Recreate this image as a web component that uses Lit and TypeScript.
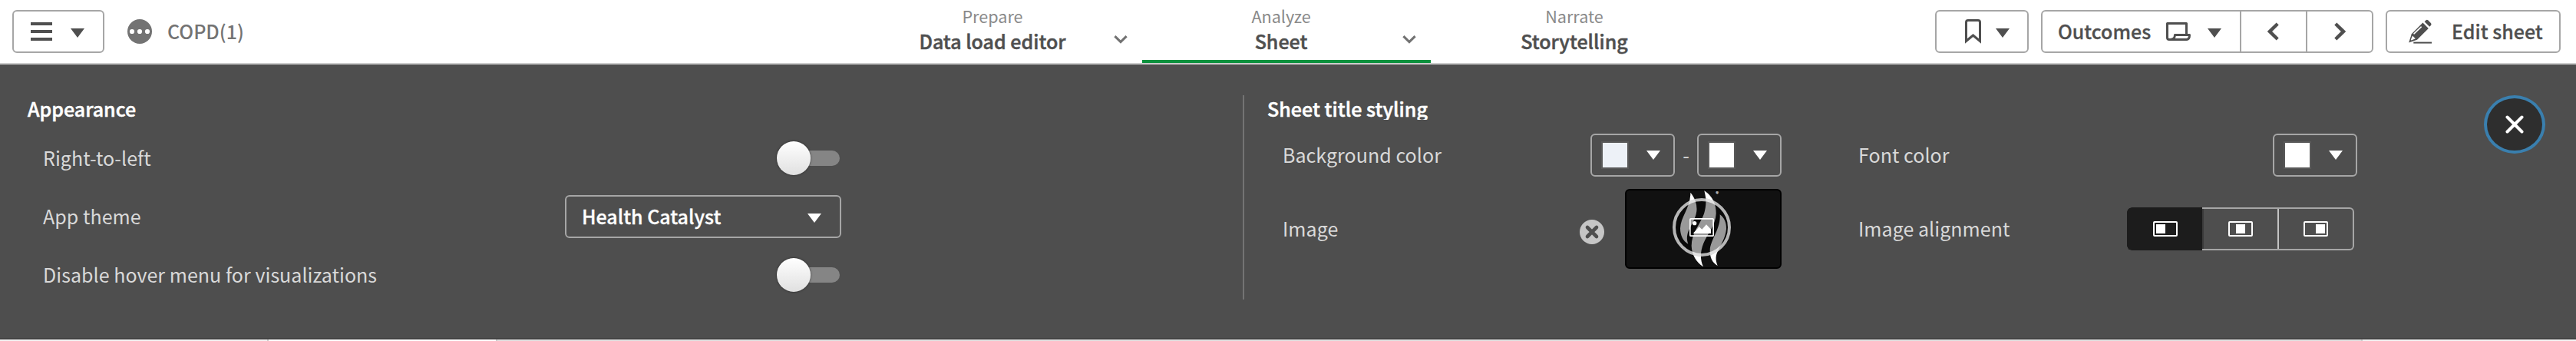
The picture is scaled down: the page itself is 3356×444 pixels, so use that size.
import { LitElement, html, css, svg, nothing } from "lit";
import { customElement, property } from "lit/decorators.js";

const caret = html`<svg class="caret" width="18" height="12" viewBox="0 0 18 12"><path d="M0 0H18L9 12Z" fill="currentColor"/></svg>`;

@customElement("color-button")
class ColorButton extends LitElement {
  @property() color = "#ffffff";
  static styles = css`
    :host { display: block; }
    .button { box-sizing: border-box; width: 110px; height: 56px; border: 2px solid #a6a6a6; border-radius: 6px;
      display: flex; align-items: center; justify-content: space-between; padding: 0 17px 0 12px; color: #fff; }
    .swatch { width: 32px; height: 32px; border: 2px solid #595959; }
    svg { display: block; }
  `;
  render() {
    return html`<div class="button"><div class="swatch" style="background:${this.color}"></div>${caret}</div>`;
  }
}

@customElement("toggle-switch")
class ToggleSwitch extends LitElement {
  static styles = css`
    :host { display: flex; align-items: center; width: 82px; height: 44px; }
    .knob { width: 44px; height: 44px; border-radius: 50%; flex: none; z-index: 1;
      background: linear-gradient(#ffffff, #e0e0e0); box-shadow: 0 0 3px rgba(0,0,0,.5); }
    .track { height: 20px; flex: 1; margin-left: -20px; border-radius: 10px; background: #858585; }
  `;
  render() {
    return html`<div class="knob"></div><div class="track"></div>`;
  }
}

@customElement("app-root")
class AppRoot extends LitElement {
  static styles = css`
    :host { display: block; width: 3356px; height: 444px; overflow: hidden; background: #fff;
      font-family: "Noto Sans CJK SC", "Noto Sans", sans-serif; font-size: 25px; line-height: 32px; color: #4f4f4f; }
    * { box-sizing: border-box; }
    svg { display: block; flex: none; }
    .header { display: flex; height: 84px; border-bottom: 2px solid #ccc; background: #fff; }
    .left { width: 1112px; display: flex; align-items: center; padding-left: 16px; }
    .btn { height: 56px; border: 2px solid #a6a6a6; border-radius: 6px; display: flex; align-items: center; }
    .menu { width: 120px; padding: 0 24px 0 22px; justify-content: space-between; }
    .btn .caret { margin-top: 4px; }
    .app { margin: 0 20px 0 30px; }
    .name { color: #737373; font-weight: 500; padding-bottom: 2px; white-space: nowrap; }
    .tab { width: 376px; height: 82px; display: flex; padding-left: 42px; }
    .tab.active { border-bottom: 4px solid #0b913d; }
    .tab .texts { width: 278px; text-align: center; padding-top: 5px; white-space: nowrap; }
    .tab.plain { padding-left: 0; }
    .tab.plain .texts { width: 374px; }
    .kind { font-size: 21.6px; line-height: 31px; color: #8a8a8a; }
    .view { font-size: 25px; line-height: 32px; font-weight: 500; padding-top: 1px; -webkit-text-stroke: .5px #4f4f4f; }
    .tab .chev { margin: 46px 0 0 19px; color: #737373; }
    .right { flex: 1; display: flex; align-items: center; justify-content: flex-end; gap: 16px; padding-right: 20px; }
    .bookmark { width: 122px; padding-left: 37px; gap: 19px; }
    .group { width: 433px; }
    .sheet { width: 257px; padding: 0 24px 0 20px; display: flex; align-items: center; height: 52px; }
    .sheet .easel { margin: 0 22px 0 auto; }
    .strong { font-weight: 500; padding-bottom: 2px; white-space: nowrap; -webkit-text-stroke: .3px currentColor; }
    .arrow { width: 86px; height: 52px; border-left: 2px solid #a6a6a6; display: flex; align-items: center; justify-content: center; }
    .edit { width: 228px; padding-left: 28px; gap: 25px; }
    .panel { display: flex; height: 358px; background: #4e4e4e; border-bottom: 2px solid #444; padding-top: 40px; color: #d9d9d9; }
    h2 { margin: 0; font-size: 25px; line-height: 32px; font-weight: 500; color: #fff; white-space: nowrap; -webkit-text-stroke: .5px #fff; }
    .appearance { width: 1096px; padding: 1px 0 0 36px; }
    .appearance h2 { margin-bottom: 11px; }
    .label { padding-bottom: 2px; letter-spacing: .04px; }
    .row { height: 76px; padding-left: 20px; display: flex; justify-content: space-between; align-items: center; white-space: nowrap; }
    .row toggle-switch { margin-right: 2px; }
    .row .select { width: 360px; padding: 0 24px 0 20px; justify-content: space-between; color: #fff; }
    .styling { margin-left: 523px; height: 266px; border-left: 2px solid #737373; padding: 1px 0 0 30px; width: 1452px; }
    .styling h2 { height: 31px; overflow: hidden; letter-spacing: .04px; }
    .fields { display: grid; grid-template-columns: 650px 650px; column-gap: 100px; padding-left: 20px; margin-top: 18px; }
    .field { display: flex; align-items: center; justify-content: space-between; white-space: nowrap; }
    .color { height: 56px; }
    .pic { height: 104px; margin-top: 16px; }
    .controls { display: flex; align-items: center; }
    .dash { width: 29px; text-align: center; padding-bottom: 2px; }
    .clear { margin: 8px 27px 0 0; }
    .thumb { width: 204px; height: 104px; border: 2px solid #000; border-radius: 6px; background: #111; overflow: hidden; }
    .thumb svg { margin: -2px; }
    .align { width: 296px; height: 56px; border-radius: 6px; border: 2px solid #a6a6a6; border-left: 0; display: flex; margin-right: 4px; }
    .opt { flex: 1; display: flex; align-items: center; justify-content: center; color: #fff; border-left: 2px solid #c4c4c4; }
    .opt.on { background: #1c1c1c; border: 0; flex: none; width: 98px; padding-left: 2px; margin: -2px 0; border-radius: 6px 0 0 6px; }
    .opt.on + .opt { border-left-color: #3b3b3b; }
    .close { margin-left: 165px; width: 80px; height: 76px; border: 4px solid #3a7fae; border-radius: 50%; background: #2e2e2e;
      display: flex; align-items: center; justify-content: center; }
    .below { display: flex; height: 2px; }
    .below .a { width: 350px; background: #f2f2f2; border-right: 2px solid #ccc; }
    .below .b { width: 296px; background: #fff; }
    .below .c { flex: 1; background: #e0e0e0; border-left: 2px solid #ccc; }
    .below .d { width: 280px; background: #f2f2f2; border-left: 2px solid #ccc; }
  `;

  tab(kind: string, view: string, state: string) {
    return html`<div class="tab ${state}">
      <div class="texts"><div class="kind">${kind}</div><div class="view">${view}</div></div>
      ${state === "plain" ? nothing : html`<svg class="chev" width="18" height="11" viewBox="0 0 18 11"><path d="M1.4 1.2L9 8.6L16.6 1.2" fill="none" stroke="currentColor" stroke-width="3.2"/></svg>`}
    </div>`;
  }

  option(x: number, on = false) {
    return html`<div class="opt ${on ? "on" : ""}"><svg width="32" height="20" viewBox="0 0 32 20">
      <rect x="1" y="1" width="30" height="18" rx="1" fill="none" stroke="#fff" stroke-width="2"/>
      ${svg`<rect x=${x} y="4" width="12" height="12" fill="#fff"/>`}</svg></div>`;
  }

  render() {
    return html`
      <div class="header">
        <div class="left">
          <div class="btn menu">
            <svg width="28" height="24" viewBox="0 0 28 24"><path d="M0 2H28M0 12H28M0 22H28" stroke="#4f4f4f" stroke-width="4"/></svg>
            ${caret}
          </div>
          <svg class="app" width="32" height="32" viewBox="0 0 32 32"><circle cx="16" cy="16" r="16" fill="#737373"/><g fill="#fff"><circle cx="6" cy="16" r="3.1"/><circle cx="16" cy="16" r="3.1"/><circle cx="26" cy="16" r="3.1"/></g></svg>
          <div class="name">COPD(1)</div>
        </div>
        ${this.tab("Prepare", "Data load editor", "")}
        ${this.tab("Analyze", "Sheet", "active")}
        ${this.tab("Narrate", "Storytelling", "plain")}
        <div class="right">
          <div class="btn bookmark">
            <svg width="21" height="32" viewBox="0 0 21 32"><path d="M1.5 28.5V4Q1.5 1.5 4 1.5H17Q19.5 1.5 19.5 4V28.5L10.5 21Z" fill="none" stroke="#4f4f4f" stroke-width="3"/></svg>
            ${caret}
          </div>
          <div class="btn group">
            <div class="sheet">
              <div class="strong">Outcomes</div>
              <svg class="easel" width="32" height="24" viewBox="0 0 32 24"><g fill="none" stroke="#4f4f4f" stroke-width="3" stroke-linejoin="round"><path d="M26.5 15V1.5H1.5V20Q1.5 22.5 4 22.5H27Q30.5 22 30.5 16.5H11.5Q11 22.5 6.5 22"/></g></svg>
              ${caret}
            </div>
            <div class="arrow"><svg width="16" height="24" viewBox="0 0 16 24"><path d="M13.2 2L3 12L13.2 22" fill="none" stroke="#4f4f4f" stroke-width="4.4"/></svg></div>
            <div class="arrow"><svg width="16" height="24" viewBox="0 0 16 24"><path d="M2.8 2L13 12L2.8 22" fill="none" stroke="#4f4f4f" stroke-width="4.4"/></svg></div>
          </div>
          <div class="btn edit">
            <svg width="31" height="32" viewBox="0 0 31 32"><path d="M6.3 30.6H30" stroke="#4f4f4f" stroke-width="2"/><g fill="#4f4f4f"><path d="M20.6 3.2L22.6 1.2Q24 .2 25.4 1.4L28.9 4.9Q30.2 6.4 29 7.9L27.2 9.8Z"/><path d="M18.4 4.6L25.8 12L11 26.8L.2 30.4L3.8 19.2Z"/></g><path d="M5 21.4L8.8 25.3L3.6 27.5L2.8 26.7Z" fill="#fff"/><path d="M7 18.8L16.2 10.2" stroke="#fff" stroke-width="1.6" stroke-linecap="round"/></svg>
            <div class="strong">Edit sheet</div>
          </div>
        </div>
      </div>
      <div class="panel">
        <div class="appearance">
          <h2>Appearance</h2>
          <div class="row"><span class="label">Right-to-left</span><toggle-switch></toggle-switch></div>
          <div class="row"><span class="label">App theme</span><div class="btn select"><span class="strong">Health Catalyst</span>${caret}</div></div>
          <div class="row"><span class="label">Disable hover menu for visualizations</span><toggle-switch></toggle-switch></div>
        </div>
        <div class="styling">
          <h2>Sheet title styling</h2>
          <div class="fields">
            <div class="field color"><span class="label">Background color</span>
              <div class="controls"><color-button color="#edf1f7"></color-button><span class="dash">-</span><color-button></color-button></div>
            </div>
            <div class="field color"><span class="label">Font color</span><color-button></color-button></div>
            <div class="field pic"><span class="label">Image</span>
              <div class="controls">
                <svg class="clear" width="32" height="32" viewBox="0 0 32 32"><circle cx="16" cy="16" r="16" fill="#c6c6c6"/><path d="M10 10L22 22M22 10L10 22" stroke="#4e4e4e" stroke-width="4.6" stroke-linecap="round"/></svg>
                <div class="thumb">
                  <svg width="204" height="104" viewBox="231 288 612 312">
                    <g fill="#fff">
                      <path d="M487 302C503 322 514 347 511 375C507 408 484 435 476 462C472 478 473 490 478 503C458 492 447 470 447 442C449 395 488 360 487 302Z"/>
                      <path d="M541 295C572 316 588 345 587 385C585 430 553 465 538 500C524 535 525 565 537 592C510 575 492 545 491 510C491 460 526 425 540 385C550 350 549 325 541 295Z"/>
                      <path d="M602 388C620 402 628 420 627 445C624 480 603 510 592 535C583 556 587 573 593 588C571 575 563 555 563 528C565 485 606 445 602 388Z"/>
                      <text x="586" y="319" font-size="22" font-weight="700">®</text>
                    </g>
                    <circle cx="531" cy="438" r="114" fill="#000" fill-opacity=".4"/>
                    <circle cx="531" cy="438" r="108" fill="none" stroke="#fff" stroke-opacity=".7" stroke-width="12"/>
                    <rect x="485.5" y="404.5" width="91" height="67" rx="3" fill="none" stroke="#fff" stroke-width="5"/>
                    <circle cx="503" cy="422" r="8" fill="#fff"/>
                    <path d="M497 462L521 436L532 446L549 427L567 446V462Z" fill="#fff"/>
                  </svg>
                </div>
              </div>
            </div>
            <div class="field pic"><span class="label">Image alignment</span>
              <div class="align">${this.option(4, true)}${this.option(10)}${this.option(16)}</div>
            </div>
          </div>
        </div>
        <div class="close"><svg width="24" height="24" viewBox="0 0 24 24"><path d="M2.5 2.5L21.5 21.5M21.5 2.5L2.5 21.5" stroke="#fff" stroke-width="4" stroke-linecap="round"/></svg></div>
      </div>
      <div class="below"><div class="a"></div><div class="b"></div><div class="c"></div><div class="d"></div></div>
    `;
  }
}
